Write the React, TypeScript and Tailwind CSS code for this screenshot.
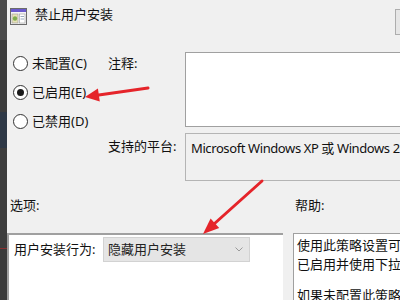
import React from "react";

const font = { fontFamily: '"Noto Sans", "Noto Sans CJK SC", sans-serif' };

const PolicyIcon = () => (
  <svg width="17" height="17" viewBox="0 0 17 17">
    <rect x="0.5" y="0.5" width="16" height="16" fill="#f4f4f4" stroke="#6b6b6b" />
    <rect x="1" y="1" width="15" height="3" fill="#6a5acd" />
    <rect x="2" y="6" width="6" height="9" fill="#e8e2b8" stroke="#9a9a9a" strokeWidth="0.6" />
    <circle cx="5" cy="10.5" r="2.2" fill="#7fae4f" />
    <rect x="9.5" y="6" width="5.5" height="9" fill="#ffffff" stroke="#9a9a9a" strokeWidth="0.6" />
    <line x1="10.5" y1="8.5" x2="14" y2="8.5" stroke="#9ab" />
    <line x1="10.5" y1="11" x2="14" y2="11" stroke="#9ab" />
  </svg>
);

const Radio = ({ label, checked }: { label: string; checked?: boolean }) => (
  <div className="h-[29px] flex items-center gap-[4px]">
    <span className="shrink-0 w-[15px] h-[15px] rounded-full border border-[#333333] bg-white flex items-center justify-center">
      {checked && <span className="w-[7px] h-[7px] rounded-full bg-[#1a1a1a]" />}
    </span>
    <span className="text-[13px] text-[#111] whitespace-nowrap">{label}</span>
  </div>
);

const Arrows = () => (
  <svg className="absolute left-0 top-0 pointer-events-none" width="400" height="300">
    <line x1="148" y1="88" x2="97" y2="95.3" stroke="#e5242a" strokeWidth="3" strokeLinecap="round" />
    <polygon points="85,97 99.8,101.5 97.9,88.6" fill="#e5242a" />
    <line x1="262" y1="181" x2="214" y2="224" stroke="#e5242a" strokeWidth="3" strokeLinecap="round" />
    <polygon points="203,234 219.2,228.1 210.6,218.5" fill="#e5242a" />
  </svg>
);

export default function App() {
  return (
    <div className="relative w-[400px] h-[300px] overflow-hidden flex" style={font}>
      <div className="w-[7px] shrink-0 flex flex-col">
        <div className="h-[40px] bg-[#4a4a4a]" />
        <div className="h-[72px] bg-[#3c3c3c]" />
        <div className="h-[36px] bg-[#2e3846]" />
        <div className="h-[100px] bg-[#3d3d3d]" />
        <div className="h-[1px] bg-[#8a3030]" />
        <div className="flex-1 bg-[#3a3a3a]" />
      </div>

      <div className="flex-1 min-w-0 bg-[#f0f0f0] flex flex-col text-[#111]">
        <div className="h-[51px] shrink-0 flex items-start">
          <div className="shrink-0 ml-[3px] mt-[8px]">
            <PolicyIcon />
          </div>
          <span className="ml-[8px] mt-[5px] text-[13px] whitespace-nowrap">禁止用户安装</span>
          <div className="shrink-0 ml-auto mt-[9px] w-[30px] h-[26px] -mr-[25px] border border-[#adadad] bg-[#e6e6e6]" />
        </div>

        <div className="h-[130px] shrink-0 flex">
          <div className="w-[101px] shrink-0 pl-[6px] -mt-[2px] flex flex-col">
            <Radio label="未配置(C)" />
            <Radio label="已启用(E)" checked />
            <Radio label="已禁用(D)" />
          </div>
          <div className="flex-1 min-w-0 flex flex-col">
            <div className="mt-[1px] flex">
              <span className="w-[77px] shrink-0 pt-[2px] text-[13px]">注释:</span>
              <div className="flex-1 min-w-0 h-[75px] bg-white border border-[#a0a0a0] -mr-[4px]" />
            </div>
            <div className="mt-[6px] flex">
              <span className="w-[77px] shrink-0 pt-[4px] text-[13px] whitespace-nowrap">支持的平台:</span>
              <div className="flex-1 min-w-0 h-[48px] border border-[#b4b4b4] bg-[#f0f0f0] pl-[5px] pt-[5px] -mr-[60px] text-[13px] tracking-[-0.4px] whitespace-nowrap overflow-hidden">
                Microsoft Windows XP 或 Windows 2000 Service Pack 4
              </div>
            </div>
          </div>
        </div>

        <div className="h-[52px] shrink-0 flex text-[13px] pt-[15px]">
          <span className="shrink-0 ml-[3px] w-[285px]">选项:</span>
          <span>帮助:</span>
        </div>

        <div className="flex-1 flex">
          <div className="w-[276px] shrink-0 border-l-2 border-t-2 border-[#a0a0a0] bg-white pt-[2px]">
            <div className="flex items-center">
              <span className="w-[94px] shrink-0 pl-[5px] text-[13px] whitespace-nowrap">用户安装行为:</span>
              <div className="w-[147px] shrink-0 h-[25px] bg-[#e5e5e5] border border-[#d2d2d2] flex items-center pl-[4px] pr-[6px] text-[13px] text-[#222]">
                <span className="flex-1">隐藏用户安装</span>
                <svg width="8" height="5" viewBox="0 0 8 5">
                  <path d="M0.5 0.5 L4 4 L7.5 0.5" fill="none" stroke="#9a9a9a" strokeWidth="1" />
                </svg>
              </div>
            </div>
          </div>
          <div className="ml-[10px] flex-1 min-w-0 -mr-[40px] border-l border-t border-[#a0a0a0] bg-white pl-[3px] pt-[2px] text-[13px] leading-[19px] whitespace-nowrap overflow-hidden">
            <div>使用此策略设置可以阻止用户安装程序</div>
            <div>已启用并使用下拉列表选择</div>
            <div className="mt-[12px]">如果未配置此策略设置</div>
          </div>
        </div>
      </div>

      <Arrows />
    </div>
  );
}
